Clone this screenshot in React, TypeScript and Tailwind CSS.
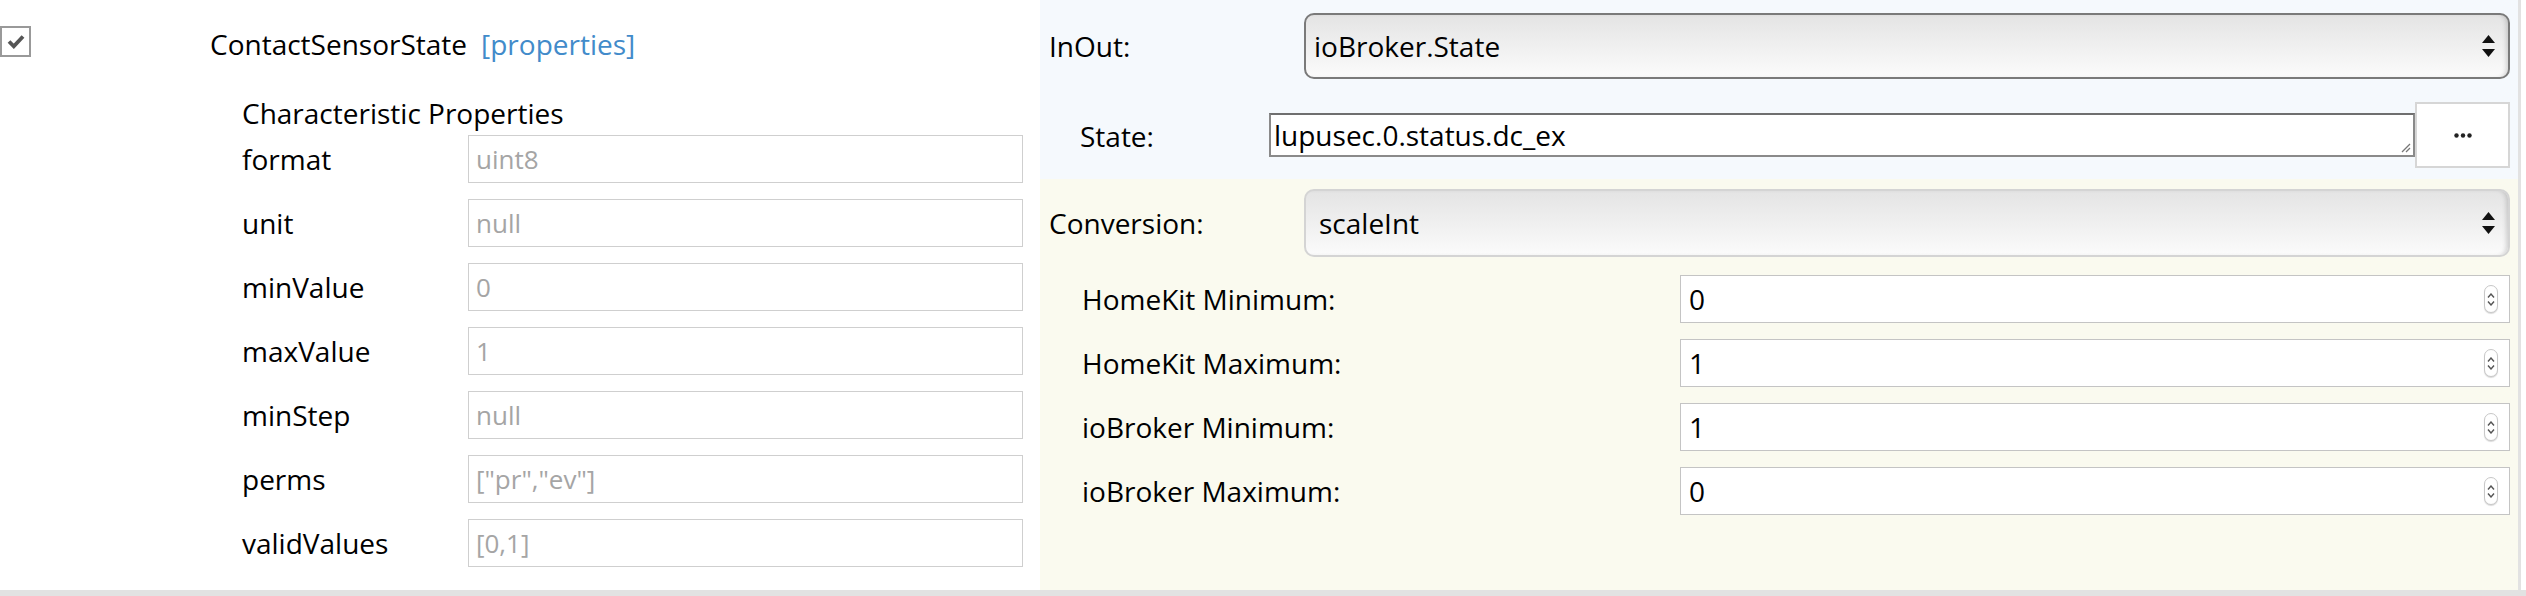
import React from "react";

const props = [
  { label: "format", value: "uint8" },
  { label: "unit", value: "null" },
  { label: "minValue", value: "0" },
  { label: "maxValue", value: "1" },
  { label: "minStep", value: "null" },
  { label: "perms", value: '["pr","ev"]' },
  { label: "validValues", value: "[0,1]" },
];

const scale = [
  { label: "HomeKit Minimum:", value: "0" },
  { label: "HomeKit Maximum:", value: "1" },
  { label: "ioBroker Minimum:", value: "1" },
  { label: "ioBroker Maximum:", value: "0" },
];

function Arrows() {
  return (
    <svg width="13" height="22" viewBox="0 0 13 22" className="shrink-0">
      <polygon points="6.5,0 13,8 0,8" fill="#111" />
      <polygon points="0,14 13,14 6.5,22" fill="#111" />
    </svg>
  );
}

function Select({ value, light }: { value: string; light?: boolean }) {
  return (
    <div
      className={
        "flex-1 h-full flex items-center justify-between rounded-[10px] bg-gradient-to-b from-[#e4e4e4] to-[#fbfbfb] pr-[13px] shadow-[inset_-4px_0_4px_-2px_rgba(0,0,0,0.15)] " +
        (light ? "border-2 border-[#d4d4d4] pl-[13px]" : "border-2 border-[#7a7a7a] pl-[8px]")
      }
    >
      <span className="text-[28px] leading-[38px] text-black">{value}</span>
      <Arrows />
    </div>
  );
}

function Spinner() {
  return (
    <div className="w-[14px] h-[28px] rounded-full border border-[#c8c8c8] bg-white flex flex-col items-center justify-center gap-[3px] shadow-[0_1px_1px_rgba(0,0,0,0.15)]">
      <svg width="8" height="5" viewBox="0 0 8 5">
        <polyline points="1,4.5 4,1 7,4.5" fill="none" stroke="#555" strokeWidth="1.4" />
      </svg>
      <svg width="8" height="5" viewBox="0 0 8 5">
        <polyline points="1,0.5 4,4 7,0.5" fill="none" stroke="#555" strokeWidth="1.4" />
      </svg>
    </div>
  );
}

export default function App() {
  return (
    <div
      className="w-[2526px] h-[596px] bg-white border-b-[6px] border-[#e2e2e2] flex text-black"
      style={{ fontFamily: '"Open Sans", "Liberation Sans", sans-serif' }}
    >
      {/* left: characteristic */}
      <div className="w-[1040px] shrink-0 flex flex-col">
        <div className="flex items-start pt-[25px]">
          <div className="mt-[1px] w-[31px] h-[31px] border-2 border-[#999] bg-white flex items-center justify-center">
            <svg width="18" height="15" viewBox="0 0 18 15">
              <polyline points="2,7.5 6.8,12.3 16,2.5" fill="none" stroke="#555" strokeWidth="3.8" />
            </svg>
          </div>
          <div className="ml-[179px] text-[28px] leading-[38px] flex">
            <span>ContactSensorState</span>
            <span className="ml-[14px] text-[#428bca]">[properties]</span>
          </div>
        </div>
        <div className="pl-[242px] mt-[31px] text-[28px] leading-[38px]">
          Characteristic Properties
        </div>
        <div className="pl-[242px] pr-[17px] mt-[3px] flex flex-col gap-[16px]">
          {props.map((p) => (
            <div key={p.label} className="flex items-center h-[48px]">
              <div className="w-[226px] text-[28px] leading-[38px]">{p.label}</div>
              <div className="flex-1 h-full border border-[#cfcfcf] bg-white flex items-center pl-[7px] text-[26px] text-[#a5a5a5]">
                {p.value}
              </div>
            </div>
          ))}
        </div>
      </div>

      {/* right: mapping */}
      <div className="w-[1481px] shrink-0 flex flex-col border-r-[3px] border-[#e2e2e2]">
        <div className="h-[179px] bg-[#f5f9fd] pl-[9px] pr-[8px] pt-[13px]">
          <div className="flex items-center h-[66px]">
            <div className="w-[255px] text-[28px] leading-[38px]">InOut:</div>
            <Select value="ioBroker.State" />
          </div>
          <div className="flex items-center h-[66px] mt-[23px]">
            <div className="w-[220px] pl-[31px] mt-[2px] text-[28px] leading-[38px]">State:</div>
            <div className="relative flex-1 h-[44px] bg-white border-2 border-[#8a8a8a] border-t-[#6f6f6f] flex items-center pl-[3px] text-[28px]">
              lupusec.0.status.dc_ex
              <svg width="10" height="10" viewBox="0 0 10 10" className="absolute right-[2px] bottom-[2px]">
                <line x1="9" y1="1" x2="1" y2="9" stroke="#777" strokeWidth="1.2" />
                <line x1="9" y1="5" x2="5" y2="9" stroke="#777" strokeWidth="1.2" />
              </svg>
            </div>
            <div className="w-[95px] h-[66px] bg-white border-2 border-[#d6d6d6] flex items-center justify-center">
              <svg width="18" height="5" viewBox="0 0 18 5">
                <circle cx="2.5" cy="2.5" r="2.2" fill="#222" />
                <circle cx="9" cy="2.5" r="2.2" fill="#222" />
                <circle cx="15.5" cy="2.5" r="2.2" fill="#222" />
              </svg>
            </div>
          </div>
        </div>

        <div className="flex-1 bg-[#fafaef] pl-[9px] pr-[8px] pt-[10px]">
          <div className="flex items-center h-[68px]">
            <div className="w-[255px] text-[28px] leading-[38px]">Conversion:</div>
            <Select value="scaleInt" light />
          </div>
          <div className="mt-[18px] flex flex-col gap-[16px]">
            {scale.map((s) => (
              <div key={s.label} className="flex items-center h-[48px]">
                <div className="w-[631px] pl-[33px] text-[28px] leading-[38px]">{s.label}</div>
                <div className="flex-1 h-full bg-white border border-[#c4c4c4] flex items-center justify-between pl-[8px] pr-[11px] text-[28px]">
                  <span>{s.value}</span>
                  <Spinner />
                </div>
              </div>
            ))}
          </div>
        </div>
      </div>
    </div>
  );
}
